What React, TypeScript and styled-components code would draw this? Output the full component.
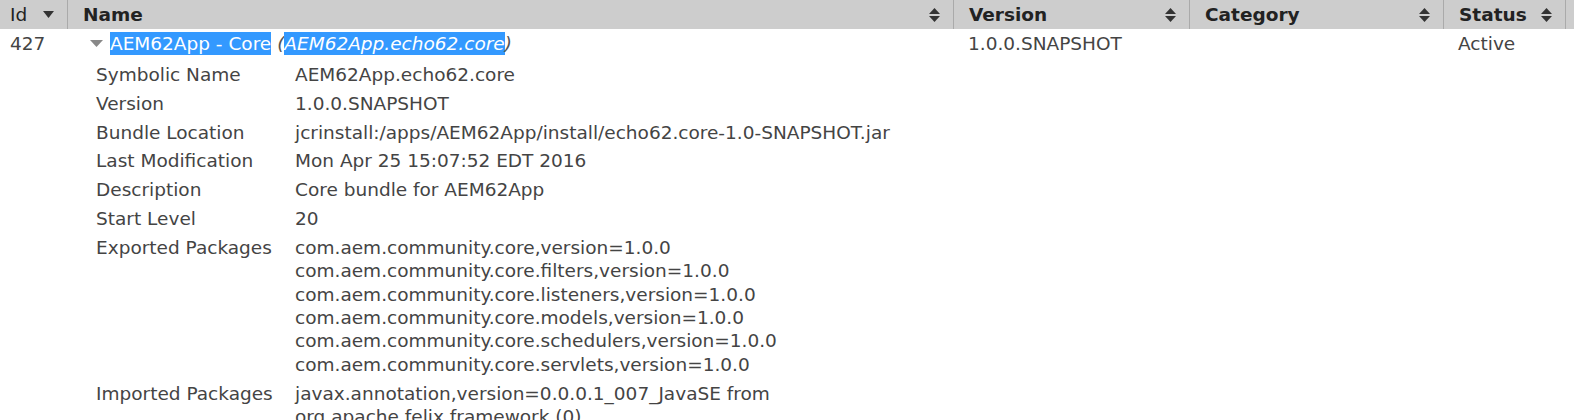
import styled, { createGlobalStyle } from 'styled-components';

const GlobalStyle = createGlobalStyle`
  html, body {
    margin: 0;
    padding: 0;
    background: #fff;
  }
  body {
    font-family: 'DejaVu Sans', Verdana, sans-serif;
    font-size: 18.5px;
    color: #444;
    overflow: hidden;
  }
`;

const COLS = '67px 886px 236px 254px 122px 1fr';

const Table = styled.div`
  width: 1574px;
`;

const HeaderRow = styled.div`
  display: grid;
  grid-template-columns: ${COLS};
  height: 29px;
  background: #cdcdcd;
`;

const HeaderCell = styled.div<{ $first?: boolean }>`
  display: flex;
  align-items: center;
  justify-content: space-between;
  padding: 0 13px 0 ${(p) => (p.$first ? 10 : 15)}px;
  border-left: ${(p) => (p.$first ? 'none' : '1px solid #aaa')};
  font-weight: ${(p) => (p.$first ? 'normal' : 'bold')};
  color: #222;
  line-height: 29px;
`;

const BodyRow = styled.div`
  display: grid;
  grid-template-columns: ${COLS};
  align-items: start;
`;

const Cell = styled.div<{ $first?: boolean }>`
  padding: 3px 0 0 ${(p) => (p.$first ? 10 : 15)}px;
  line-height: 23.4px;
  white-space: nowrap;
`;

const NameCell = styled.div`
  padding: 3px 0 0 16px;
  line-height: 23.4px;
  white-space: nowrap;
`;

const TitleLine = styled.div`
  display: flex;
  align-items: center;
`;

const Toggle = styled.svg`
  margin: 0 7px 0 7px;
  flex: none;
`;

const Selected = styled.span<{ $italic?: boolean }>`
  background: #3399ff;
  color: #fff;
  font-style: ${(p) => (p.$italic ? 'italic' : 'normal')};
`;

const Paren = styled.span`
  font-style: italic;
  color: #555;
  white-space: pre;
`;

const Details = styled.div`
  display: grid;
  grid-template-columns: 199px 1fr;
  margin: 5px 0 0 13px;
`;

const Label = styled.div`
  padding: 2.7px 0;
`;

const Value = styled.div`
  padding: 2.7px 0;
`;

function SortBoth() {
  return (
    <svg width="11" height="14" viewBox="0 0 11 14">
      <path d="M5.5 0 L11 6 L0 6 Z" fill="#333" />
      <path d="M0 8 L11 8 L5.5 14 Z" fill="#333" />
    </svg>
  );
}

function SortDown() {
  return (
    <svg width="11" height="7" viewBox="0 0 11 7">
      <path d="M0 0 L11 0 L5.5 7 Z" fill="#333" />
    </svg>
  );
}

const details: [string, string[]][] = [
  ['Symbolic Name', ['AEM62App.echo62.core']],
  ['Version', ['1.0.0.SNAPSHOT']],
  ['Bundle Location', ['jcrinstall:/apps/AEM62App/install/echo62.core-1.0-SNAPSHOT.jar']],
  ['Last Modification', ['Mon Apr 25 15:07:52 EDT 2016']],
  ['Description', ['Core bundle for AEM62App']],
  ['Start Level', ['20']],
  [
    'Exported Packages',
    [
      'com.aem.community.core,version=1.0.0',
      'com.aem.community.core.filters,version=1.0.0',
      'com.aem.community.core.listeners,version=1.0.0',
      'com.aem.community.core.models,version=1.0.0',
      'com.aem.community.core.schedulers,version=1.0.0',
      'com.aem.community.core.servlets,version=1.0.0',
    ],
  ],
  [
    'Imported Packages',
    ['javax.annotation,version=0.0.0.1_007_JavaSE from', 'org.apache.felix.framework (0)'],
  ],
];

export default function App() {
  return (
    <>
      <GlobalStyle />
      <Table>
        <HeaderRow>
          <HeaderCell $first>
            Id <SortDown />
          </HeaderCell>
          <HeaderCell>
            Name <SortBoth />
          </HeaderCell>
          <HeaderCell>
            Version <SortBoth />
          </HeaderCell>
          <HeaderCell>
            Category <SortBoth />
          </HeaderCell>
          <HeaderCell>
            Status <SortBoth />
          </HeaderCell>
          <HeaderCell />
        </HeaderRow>
        <BodyRow>
          <Cell $first>427</Cell>
          <NameCell>
            <TitleLine>
              <Toggle width="13" height="7" viewBox="0 0 13 7">
                <path d="M0 0 L13 0 L6.5 7 Z" fill="#888" />
              </Toggle>
              <Selected>AEM62App - Core</Selected>
              <Paren> (</Paren>
              <Selected $italic>AEM62App.echo62.core</Selected>
              <Paren>)</Paren>
            </TitleLine>
            <Details>
              {details.map(([label, lines]) => (
                <>
                  <Label key={label + 'l'}>{label}</Label>
                  <Value key={label + 'v'}>
                    {lines.map((line) => (
                      <div key={line}>{line}</div>
                    ))}
                  </Value>
                </>
              ))}
            </Details>
          </NameCell>
          <Cell>1.0.0.SNAPSHOT</Cell>
          <Cell />
          <Cell>Active</Cell>
          <Cell />
        </BodyRow>
      </Table>
    </>
  );
}
